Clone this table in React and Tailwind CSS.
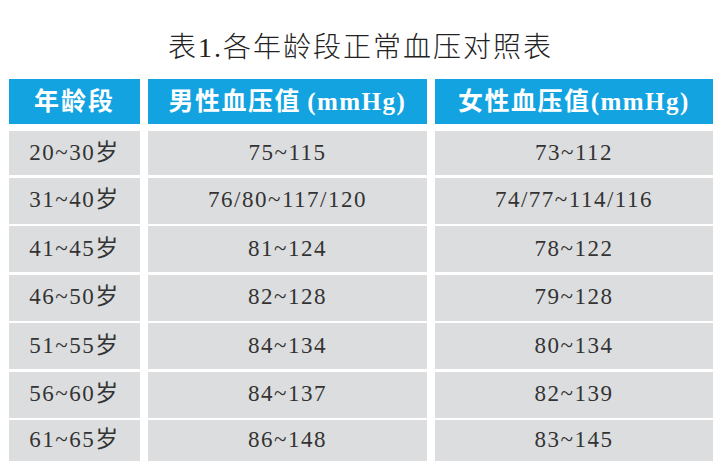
const rows = [
  ["20~30岁", "75~115", "73~112"],
  ["31~40岁", "76/80~117/120", "74/77~114/116"],
  ["41~45岁", "81~124", "78~122"],
  ["46~50岁", "82~128", "79~128"],
  ["51~55岁", "84~134", "80~134"],
  ["56~60岁", "84~137", "82~139"],
  ["61~65岁", "86~148", "83~145"],
];

const cols = "grid grid-cols-[131px_279px_278px] gap-x-[8px]";
const serif = "font-['Liberation_Serif','Noto_Sans_CJK_SC',serif]";

function rowHeight(i) {
  if (i === 0) return "h-[44px]";
  if (i === rows.length - 1) return "h-[41px]";
  return "h-[46px]";
}

export default function App() {
  return (
    <div className={`h-[475px] w-[721px] bg-white text-[#2b2b2b] ${serif}`}>
      <h1 className="pt-[29px] text-center text-[28px] font-light leading-[38px] tracking-[2px] text-[#222]">
        表1.各年龄段正常血压对照表
      </h1>

      <div className="ml-[9px] mt-[12px]">
        {/* header */}
        <div className={`${cols} h-[45px] text-[25px] font-bold text-white`}>
          <div className="flex items-center justify-center bg-[#14a3e1] tracking-[2px]">年龄段</div>
          <div className="flex items-center justify-center bg-[#14a3e1] tracking-[1.5px]">
            男性血压值<span className="ml-[6px]">(mmHg)</span>
          </div>
          <div className="flex items-center justify-center bg-[#14a3e1] tracking-[1.5px]">
            女性血压值<span>(mmHg)</span>
          </div>
        </div>

        {/* body */}
        <div className="mt-[7px] flex flex-col gap-y-[2.5px] text-[23px] tracking-[1.5px] text-[#333]">
          {rows.map((r, i) => (
            <div key={r[0]} className={`${cols} ${rowHeight(i)}`}>
              {r.map((c, j) => (
                <div key={j} className="flex items-center justify-center bg-[#dcdddf]">
                  {c}
                </div>
              ))}
            </div>
          ))}
        </div>
      </div>
    </div>
  );
}
